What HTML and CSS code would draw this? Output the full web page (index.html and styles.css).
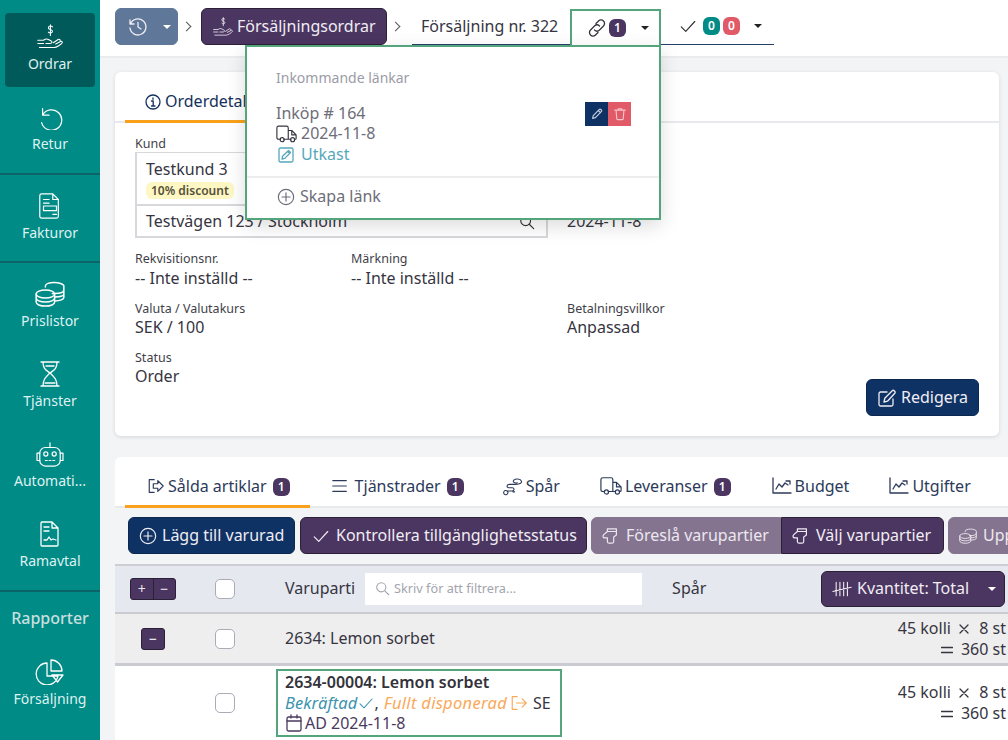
FILE: index.html
```html
<!DOCTYPE html>
<html lang="sv">
<head>
<meta charset="utf-8">
<title>Försäljning nr. 322</title>
<link rel="stylesheet" href="styles.css">
</head>
<body>
<svg class="defs" width="0" height="0" aria-hidden="true">
  <symbol id="i-hand" viewBox="0 0 32 32"><path d="M1 24h7M3 29h18c3 0 9-4 10-6 .5-1.500-1-2-2-1.500l-6 3M1 20h7c2-1.500 4-2 6-1l3 1.500c2 .5 2 3.500-1 3.500h-5M20 23l6-4c1-.5 3 0 2.500 1.500"/><path d="M19 3.500c-1-1.500-5-1.500-5 1 0 3 5 1.500 5 4.500 0 2.500-4 2.500-5 1M16.500 1v13"/></symbol>
  <symbol id="i-undo" viewBox="0 0 28 28"><path d="M6 5v7h7M6 12a11 11 0 1 1-1 8"/></symbol>
  <symbol id="i-doc" viewBox="0 0 24 28"><path d="M3 1h12l6 6v18a2 2 0 0 1-2 2H3a2 2 0 0 1-2-2V3a2 2 0 0 1 2-2zM15 1v6h6M5 7h6M5 11h6M5 14h14v5H5zM15 23h4"/></symbol>
  <symbol id="i-coins" viewBox="0 0 26 22"><ellipse cx="9" cy="11" rx="8" ry="3.500"/><path d="M1 11v7c0 2 3.500 3.500 8 3.500s8-1.500 8-3.500v-7M1 14.500c0 2 3.500 3.500 8 3.500s8-1.500 8-3.500"/><path d="M9 5V4c0-1.800 3.500-3 7.500-3S25 2.200 25 4v10c0 1.500-3 3-8 3M25 7.500c0 1.800-3.500 3-8 3h-2M25 11c0 1.500-3 2.500-8 2.700"/></symbol>
  <symbol id="i-glass" viewBox="0 0 20 26"><path d="M1 1h18M1 25h18M3 1c0 7 3 8 7 11 4-3 7-4 7-11M3 25c0-7 3-9 7-13 4 4 7 6 7 13M5 22h10M6 5h8"/></symbol>
  <symbol id="i-robot" viewBox="0 0 30 28"><rect x="4" y="7" width="22" height="20" rx="6"/><path d="M15 7V2M4 13H1v8h3M26 13h3v8h-3M10 21h2M14 21h2M18 21h2"/><circle cx="10.500" cy="14" r="2.200"/><circle cx="19.500" cy="14" r="2.200"/></symbol>
  <symbol id="i-sign" viewBox="0 0 20 26"><path d="M2 1h10l6 6v17a1 1 0 0 1-1 1H2a1 1 0 0 1-1-1V2a1 1 0 0 1 1-1zM12 1v6h6M4 6h5M4 10h5M4 19h3l2-3 2 3 2-1 3 1"/></symbol>
  <symbol id="i-pie" viewBox="0 0 28 26"><path d="M11 4a11 11 0 1 0 11 13H11zM15 1a11 11 0 0 1 11 11H15zM16 16h11l-5.500 7z"/></symbol>
  <symbol id="i-hist" viewBox="0 0 20 20"><path d="M2 3v4h4M2.500 7a8 8 0 1 1-.5 4M10 5.500V10l3 2"/></symbol>
  <symbol id="i-link" viewBox="0 0 20 20"><path d="M9 5.500l2.500-2.500a3.500 3.500 0 0 1 5 5L12.500 12c-1.500 1.500-3.500 1.500-5 0M11 14.500L8.500 17a3.500 3.500 0 0 1-5-5L7.500 8c1.500-1.500 3.500-1.500 5 0"/></symbol>
  <symbol id="i-check" viewBox="0 0 20 20"><path d="M2.500 11l5 5 10-11"/></symbol>
  <symbol id="i-info" viewBox="0 0 16 16"><circle cx="8" cy="8" r="7"/><path d="M6.500 7H8.200V12M6.500 12h3.500M8 4v1.300"/></symbol>
  <symbol id="i-truck" viewBox="0 0 24 20"><path d="M5 16H3a2 2 0 0 1-2-2V3a2 2 0 0 1 2-2h9a2 2 0 0 1 2 2v13H9M14 6h4l5 5v4a1 1 0 0 1-1 1h-1M17 16h-3M18 6v5h5"/><circle cx="7" cy="16.500" r="2.300"/><circle cx="19" cy="16.500" r="2.300"/></symbol>
  <symbol id="i-draft" viewBox="0 0 16 16"><rect x="1" y="1" width="14" height="14" rx="1.500"/><path d="M4 12l.6-2.800L10.500 3.500l2 2L6.800 11.400zM9.500 4.500l2 2"/></symbol>
  <symbol id="i-plus" viewBox="0 0 20 20"><circle cx="10" cy="10" r="8.500"/><path d="M10 5.500v9M5.500 10h9"/></symbol>
  <symbol id="i-pen" viewBox="0 0 16 16"><path d="M3 13l.7-3.200 7-7c1-1 3.500 1.200 2.500 2.300l-7 7zM9.500 4l2.500 2.500"/></symbol>
  <symbol id="i-trash" viewBox="0 0 16 16"><path d="M2 3.500h12M6 3.500V2h4v1.500M3.500 3.500l.8 10a1 1 0 0 0 1 1h5.400a1 1 0 0 0 1-1l.8-10"/></symbol>
  <symbol id="i-search" viewBox="0 0 18 18"><circle cx="7.500" cy="7.500" r="5.500"/><path d="M11.500 11.500l5 5"/></symbol>
  <symbol id="i-edit" viewBox="0 0 20 20"><path d="M16 11v5.500a1.500 1.500 0 0 1-1.500 1.500h-11A1.500 1.500 0 0 1 2 16.500v-11A1.500 1.500 0 0 1 3.500 4H10M7 14l.8-3.800L15.500 2.500c1-1 3.500 1.500 2.500 2.500l-7.500 8.200z"/></symbol>
  <symbol id="i-out" viewBox="0 0 20 20"><path d="M8 3H2.500v14H8M7 7.500h5V4l6 6-6 6v-3.500H7z"/></symbol>
  <symbol id="i-exit" viewBox="0 0 20 20"><path d="M8 3H2.500v14H8M7 10h11M13.500 5.500L18 10l-4.500 4.500"/></symbol>
  <symbol id="i-lines" viewBox="0 0 20 20"><path d="M2 4h15M2 10h15M2 16h15"/></symbol>
  <symbol id="i-track" viewBox="0 0 24 20"><path d="M5 16h6c3 0 3-4 0-4H7C4 12 4 8 8 8h7c6 0 8-2 7-4-1-3-7-3-9-1-2 2 1 4 4 3M5 16a2.500 2.500 0 1 1-4 1 2.500 2.500 0 0 1 4-1zM12 17h2"/></symbol>
  <symbol id="i-chart" viewBox="0 0 20 18"><path d="M1 1v15h18M4 12l3-5 3 3 3-4 3 2M14 4h4v3"/></symbol>
  <symbol id="i-thumb" viewBox="0 0 20 20"><path d="M8 18c-1 0-2-1-2-2v-4H3c-2 0-2.500-2-1-3.500L6 5V2h10v7l-3 2v5c0 1-1 2-2 2zM6 5h10"/></symbol>
  <symbol id="i-tally" viewBox="0 0 24 20"><path d="M5 2v16M9.500 2v16M14 2v16M18.500 2v16M1 13l22-5"/></symbol>
  <symbol id="i-cal" viewBox="0 0 16 18"><rect x="1" y="3" width="14" height="14" rx="1.500"/><path d="M1 7h14M5 1v3M11 1v3"/></symbol>
  <symbol id="i-times" viewBox="0 0 10 10"><path d="M1 1l8 8M9 1L1 9"/></symbol>
  <symbol id="i-eq" viewBox="0 0 12 8"><path d="M.5 1.500h11M.5 6.500h11"/></symbol>
</svg>

<div class="app">
  <nav class="side">
    <a class="nav active"><svg class="nav-ic"><use href="#i-hand"/></svg><span>Ordrar</span></a>
    <a class="nav"><svg class="nav-ic"><use href="#i-undo"/></svg><span>Retur</span></a>
    <hr class="sep">
    <a class="nav tight"><svg class="nav-ic"><use href="#i-doc"/></svg><span>Fakturor</span></a>
    <hr class="sep">
    <a class="nav"><svg class="nav-ic"><use href="#i-coins"/></svg><span>Prislistor</span></a>
    <a class="nav"><svg class="nav-ic"><use href="#i-glass"/></svg><span>Tjänster</span></a>
    <a class="nav"><svg class="nav-ic"><use href="#i-robot"/></svg><span>Automati...</span></a>
    <a class="nav"><svg class="nav-ic"><use href="#i-sign"/></svg><span>Ramavtal</span></a>
    <hr class="sep">
    <div class="nav-head">Rapporter</div>
    <a class="nav"><svg class="nav-ic"><use href="#i-pie"/></svg><span>Försäljning</span></a>
  </nav>

  <main class="main">
    <header class="topbar">
      <button class="btn slate hist"><svg class="ic20"><use href="#i-hist"/></svg><i class="caret"></i></button>
      <span class="chev"></span>
      <button class="btn purple crumb"><svg class="ic20"><use href="#i-hand"/></svg>Försäljningsordrar</button>
      <span class="chev"></span>
      <div class="group">
        <span class="title">Försäljning nr. 322</span>
        <div class="linkbox">
          <svg class="ic20"><use href="#i-link"/></svg><b class="badge">1</b><i class="caret dark"></i>
          <div class="pop">
            <div class="pop-title">Inkommande länkar</div>
            <div class="pop-item">
              <div class="pop-text">
                <div>Inköp # 164</div>
                <div class="ic-line"><svg class="ic20 truck"><use href="#i-truck"/></svg>2024-11-8</div>
                <div class="ic-line draft"><svg class="ic16"><use href="#i-draft"/></svg>Utkast</div>
              </div>
              <div class="pop-actions">
                <span class="act navy"><svg class="ic14"><use href="#i-pen"/></svg></span>
                <span class="act red"><svg class="ic14"><use href="#i-trash"/></svg></span>
              </div>
            </div>
            <div class="pop-foot"><svg class="ic18"><use href="#i-plus"/></svg>Skapa länk</div>
          </div>
        </div>
        <div class="checks">
          <svg class="ic18"><use href="#i-check"/></svg><b class="badge teal">0</b><b class="badge red">0</b><i class="caret dark"></i>
        </div>
      </div>
    </header>

    <section class="card details">
      <div class="tabs small-tabs">
        <div class="tab on first"><svg class="ic16"><use href="#i-info"/></svg>Orderdetaljer</div>
      </div>
      <div class="fields">
        <div class="field wide cust-field">
          <label>Kund</label>
          <div class="custbox">
            <div class="cust-top"><div>Testkund 3</div><span class="chip">10% discount</span></div>
            <div class="cust-addr">Testvägen 123 / Stockholm<svg class="ic16"><use href="#i-search"/></svg></div>
          </div>
        </div>
        <div class="field date-field"><div class="val">2024-11-8</div></div>
        <div class="field"><label>Rekvisitionsnr.</label><div class="val">-- Inte inställd --</div></div>
        <div class="field"><label>Märkning</label><div class="val">-- Inte inställd --</div></div>
        <div class="field"></div>
        <div class="field wide tight-val"><label>Valuta / Valutakurs</label><div class="val">SEK / 100</div></div>
        <div class="field tight-val"><label>Betalningsvillkor</label><div class="val">Anpassad</div></div>
        <div class="field wide tight-val"><label>Status</label><div class="val">Order</div></div>
        <button class="btn navybtn edit"><svg class="ic20"><use href="#i-edit"/></svg>Redigera</button>
      </div>
    </section>

    <section class="card lines">
      <div class="tabs">
        <div class="tab on first"><svg class="ic18"><use href="#i-out"/></svg>Sålda artiklar<b class="badge">1</b></div>
        <div class="tab tab-lines"><svg class="ic18"><use href="#i-lines"/></svg>Tjänstrader<b class="badge">1</b></div>
        <div class="tab tab-track"><svg class="ic20"><use href="#i-track"/></svg>Spår</div>
        <div class="tab"><svg class="ic22"><use href="#i-truck"/></svg>Leveranser<b class="badge">1</b></div>
        <div class="tab tab-budget"><svg class="ic20"><use href="#i-chart"/></svg>Budget</div>
        <div class="tab"><svg class="ic20"><use href="#i-chart"/></svg>Utgifter</div>
      </div>
      <div class="toolbar">
        <button class="btn navybtn add"><svg class="ic18"><use href="#i-plus"/></svg>Lägg till varurad</button>
        <button class="btn purple control"><svg class="ic18"><use href="#i-check"/></svg>Kontrollera tillgänglighetsstatus</button>
        <div class="joined">
          <button class="btn lilac"><svg class="ic18"><use href="#i-thumb"/></svg>Föreslå varupartier</button>
          <button class="btn purple"><svg class="ic18"><use href="#i-thumb"/></svg>Välj varupartier</button>
        </div>
        <button class="btn lilac update"><svg class="ic18"><use href="#i-coins"/></svg>Uppdatera priser</button>
      </div>
      <div class="row head">
        <div class="pm"><span>+</span><span>−</span></div>
        <i class="cb"></i>
        <div class="head-main">
          <span>Varuparti</span>
          <div class="filter"><svg class="ic14"><use href="#i-search"/></svg>Skriv för att filtrera...</div>
          <span class="spar">Spår</span>
          <button class="btn purple qty"><svg class="ic20"><use href="#i-tally"/></svg>Kvantitet: Total<i class="caret"></i></button>
        </div>
      </div>
      <div class="row grp">
        <div><span class="minus">−</span></div>
        <i class="cb"></i>
        <div class="row-name">2634: Lemon sorbet</div>
        <div class="qtytext"><div>45 kolli <svg class="op-x"><use href="#i-times"/></svg> 8 st</div><div><svg class="op-eq"><use href="#i-eq"/></svg> 360 st</div></div>
      </div>
      <div class="row item">
        <div></div>
        <i class="cb"></i>
        <div class="lot">
          <div class="lot-name">2634-00004: Lemon sorbet</div>
          <div class="lot-status"><span class="ok">Bekräftad<svg class="ic16"><use href="#i-check"/></svg></span><span class="comma">,</span><span class="orange">Fullt disponerad<svg class="ic18"><use href="#i-exit"/></svg></span><span>SE</span></div>
          <div class="lot-date"><svg class="ic18"><use href="#i-cal"/></svg>AD 2024-11-8</div>
        </div>
        <div class="qtytext"><div>45 kolli <svg class="op-x"><use href="#i-times"/></svg> 8 st</div><div><svg class="op-eq"><use href="#i-eq"/></svg> 360 st</div></div>
      </div>
    </section>
  </main>
</div>
</body>
</html>
```

FILE: styles.css
```css
* { box-sizing: border-box; }
html, body { margin: 0; height: 100%; overflow: hidden; }
body { font-family: "Noto Sans", "Open Sans", sans-serif; font-size: 16px; line-height: 21px; color: #36353f; background: #f3f4f6; }
.defs { position: absolute; }
svg { fill: none; stroke: currentColor; stroke-width: 1.3; stroke-linecap: round; stroke-linejoin: round; flex: none; }
.ic14 { width: 14px; height: 14px; }
.ic16 { width: 16px; height: 16px; }
.ic18 { width: 18px; height: 18px; }
.ic20 { width: 20px; height: 20px; }
.ic22 { width: 22px; height: 20px; }

.app { display: flex; height: 740px; width: 1008px; }

/* sidebar */
.side { width: 100px; flex: none; background: #008b87; color: #dff1f0; padding: 13px 5px 0; overflow: hidden; height: 740px; }
.nav { display: flex; flex-direction: column; align-items: center; height: 74px; margin-bottom: 6px; border-radius: 4px; font-size: 14px; line-height: 20px; padding-top: 11px; }
.nav.tight { margin-bottom: 5px; }
.nav span { margin-top: 4px; }
.nav-ic { width: 30px; height: 26px; stroke-width: 1.3; color: #fff; }
.nav.active { background: #015a5a; }
.sep { border: 0; height: 2px; background: #0b6468; margin: 0 -5px 7px; }
.nav-head { text-align: center; font-size: 16px; font-weight: 500; color: #c8dfde; padding-top: 9px; height: 49px; }

/* main */
.main { flex: 1; min-width: 0; padding: 0 9px 0 15px; overflow: hidden; height: 740px; }
.topbar { height: 58px; margin: 0 -9px 0 -15px; padding: 8px 15px 0; background: #fff; border-bottom: 2px solid #ececee; display: flex; align-items: flex-start; }
.btn { font: inherit; color: #f0edf3; border: 1px solid transparent; border-radius: 6px; height: 37px; padding: 0 10px; display: inline-flex; align-items: center; gap: 6px; white-space: nowrap; flex: none; }
.slate { background: #5f7799; border-color: #5f7799; }
.purple { background: #4b3561; border-color: #2b2036; }
.navybtn { background: #0f3264; border-color: #0c2850; }
.lilac { background: #85748f; border-color: #85748f; color: #ece8ef; }
.hist { width: 63px; justify-content: flex-start; gap: 15px; padding-left: 12px; }
.crumb { width: 186px; padding-left: 11px; gap: 4px; }
.caret { display: inline-block; width: 0; height: 0; border: 4px solid transparent; border-top-color: #fff; border-bottom: 0; }
.caret.dark { border-top-color: #222; }
.chev { width: 7px; height: 7px; border-top: 1.300px solid #555; border-right: 1.300px solid #555; transform: rotate(45deg); margin: 15px 11px 0 5px; flex: none; }
.group { display: flex; align-items: stretch; height: 37px; margin-left: 2px; border-bottom: 1px solid #26406e; width: 362px; padding-left: 9px; }
.title { padding-top: 8px; width: 149px; flex: none; }
.linkbox { position: relative; width: 91px; height: 38px; margin-top: 1px; border: 2px solid #55a57c; background: #fff; display: flex; align-items: center; gap: 2px; padding-left: 15px; flex: none; z-index: 5; }
.linkbox .caret { margin-left: 13px; }
.badge { display: inline-flex; align-items: center; justify-content: center; width: 17px; height: 18px; border-radius: 6px; background: #4b3561; color: #fff; font-size: 12px; font-weight: 600; line-height: 1; }
.badge.teal { background: #008b87; }
.badge.red { background: #e05a68; }
.checks { display: flex; align-items: center; gap: 3px; padding-left: 18px; color: #333; }
.checks .badge:first-of-type { margin-left: 3px; }
.checks .caret { margin-left: 11px; }

/* popover */
.pop { position: absolute; top: 34px; right: -2px; width: 416px; height: 175px; background: #fff; border: 2px solid #55a57c; box-shadow: 0 6px 18px rgba(0,0,0,.14); color: #6d6d78; z-index: 6; }
.pop-title { font-size: 14px; color: #9b9ca6; padding: 20px 29px 0; }
.pop-item { display: flex; justify-content: space-between; padding: 15px 28px 0 29px; height: 90px; border-bottom: 2px solid #ededf0; }
.ic-line { display: flex; align-items: center; gap: 4px; }
.pop-text > div:first-child { margin-bottom: -1px; }
.truck { color: #36353f; width: 21px; }
.draft { color: #57a7bb; padding-left: 2px; gap: 7px; }
.pop-actions { display: flex; height: 24px; margin-top: -1px; }
.act { width: 23px; height: 24px; display: flex; align-items: center; justify-content: center; color: #c8d0de; }
.act.navy { background: #0f3264; }
.act.red { background: #e05a68; color: #f6c4ca; }
.pop-foot { display: flex; align-items: center; gap: 5px; padding: 8px 30px; }

/* cards */
.card { background: #fff; border-radius: 6px; }
.details { height: 364px; margin-top: 14px; padding-top: 1px; box-shadow: 0 1px 4px rgba(0,0,0,.12); }
.tabs { display: flex; height: 51px; border-bottom: 2px solid #e8e9ec; padding-left: 10px; color: #2c3a5a; }
.small-tabs { height: 50px; padding-left: 10px; color: #15315e; }
.tab { display: flex; align-items: center; gap: 3px; padding: 10px 20px 1px 21px; position: relative; white-space: nowrap; }
.tab .badge { margin-left: 3px; margin-top: 2px; }
.tab.first { padding-left: 22px; }
.tab.on::after { content: ""; position: absolute; left: 0; right: 0; bottom: -2px; height: 3px; background: #f9a11b; }
.tab-lines { padding-right: 18px; }
.tab-lines svg { margin-right: 3px; }
.tab-track { padding-right: 19px; }
.tab-budget { padding-right: 19px; }
.small-tabs .tab { padding-left: 20px; gap: 4px; }
.fields { display: grid; grid-template-columns: 216px 216px 1fr; row-gap: 10.500px; padding: 12px 20px 0; color: #36353f; }
.field label { display: block; font-size: 12.500px; line-height: 17px; color: #3f3f4a; }
.val { line-height: 22px; }
.tight-val .val { line-height: 20px; margin-bottom: 2px; }
.wide { grid-column: span 2; }
.cust-field { margin-bottom: 1.500px; }
.custbox { width: 413px; height: 86px; border: 2px solid #d7d8dc; border-top-width: 1px; }
.cust-top { height: 53px; padding: 6px 9px 0; border-bottom: 2px solid #d7d8dc; line-height: 21px; }
.chip { display: inline-block; margin-top: 2px; vertical-align: top; background: #fdf7c3; border-radius: 6px; font-size: 12px; font-weight: 600; line-height: 17px; padding: 0 5px; color: #55503a; }
.cust-addr { display: flex; justify-content: space-between; align-items: center; padding: 5px 11px 0 9px; }
.date-field { align-self: end; padding-bottom: 7.500px; }
.edit { grid-column: 3; justify-self: end; align-self: end; margin-top: 30px; width: 113px; gap: 4px; }

.lines { height: 300px; margin: 21px -9px 0 0; border-radius: 6px 0 0 0; }
.toolbar { height: 56px; background: #f3f4f6; padding: 9px 0 0 13px; display: flex; gap: 5px; overflow: hidden; }
.add { width: 167px; gap: 5px; }
.control { width: 287px; padding-left: 11px; }
.joined { display: flex; margin-left: -1px; flex: none; }
.joined .btn:first-child { border-radius: 6px 0 0 6px; width: 190px; }
.joined .btn:last-child { border-radius: 0 6px 6px 0; width: 163px; }
.update { margin-left: -1px; }
.row { display: grid; grid-template-columns: 100px 70px 1fr auto; align-items: center; padding-right: 2px; }
.head { height: 48px; background: #e5e8ef; border-top: 2px solid #ccced4; padding-bottom: 1px; }
.grp { height: 54px; background: #eeeeef; border-top: 2px solid #c9cbd0; border-bottom: 3px solid #c9cbd0; }
.item { height: 76px; border-bottom: 2px solid #d9dade; }
.row > div:first-child { padding-left: 15px; }
.head-main { grid-column: 3 / 5; display: flex; align-items: center; }
.pm { display: inline-flex; width: 46px; height: 22px; margin-left: 15px; padding-left: 0 !important; background: #4b3561; border: 1px solid #2b2036; border-radius: 3px; color: #ece8ef; font-size: 14px; }
.pm span { flex: 1; text-align: center; line-height: 19px; }
.pm span + span { border-left: 1px solid #2b2036; }
.cb { display: block; width: 20px; height: 20px; border: 1px solid #a9abb6; border-radius: 5px; background: #fff; }
.filter { width: 277px; height: 32px; margin-left: 10px; background: #fff; display: flex; align-items: center; gap: 4px; padding-left: 10px; font-size: 12.700px; color: #a3a4ad; }
.filter svg { width: 15px; height: 15px; }
.spar { margin-left: 30px; }
.qty { margin-left: auto; margin-right: 1px; width: 184px; height: 36px; padding-left: 10px; gap: 5px; }
.qty .caret { margin-left: 14px; }
.minus { display: flex; align-items: center; justify-content: center; width: 24px; height: 22px; margin-left: 11px; background: #4b3561; border: 1px solid #2b2036; border-radius: 3px; color: #fff; font-size: 14px; line-height: 1; }
.qtytext { text-align: right; white-space: nowrap; }
.op-x { width: 10px; height: 10px; margin: 0 6px 0 4px; vertical-align: 0; }
.op-eq { width: 12px; height: 8px; margin-right: 4px; vertical-align: 1px; }
.lot { justify-self: start; width: 286px; height: 68px; margin-left: -9px; border: 2px solid #55a57c; padding: 1px 7px; line-height: 20.500px; white-space: nowrap; }
.lot-name { font-weight: 600; color: #33323b; }
.lot-status { display: flex; align-items: center; white-space: pre; }
.ok { display: inline-flex; align-items: center; gap: 1px; font-style: italic; font-size: 16.500px; letter-spacing: .1px; color: #3d93ae; }
.comma { margin-right: 5px; }
.orange { display: inline-flex; align-items: center; gap: 3px; font-style: italic; font-size: 16.500px; letter-spacing: .3px; color: #f9a95a; margin-right: 5px; }
.lot-date { display: flex; align-items: center; color: #4b3a60; gap: 2px; }
```
